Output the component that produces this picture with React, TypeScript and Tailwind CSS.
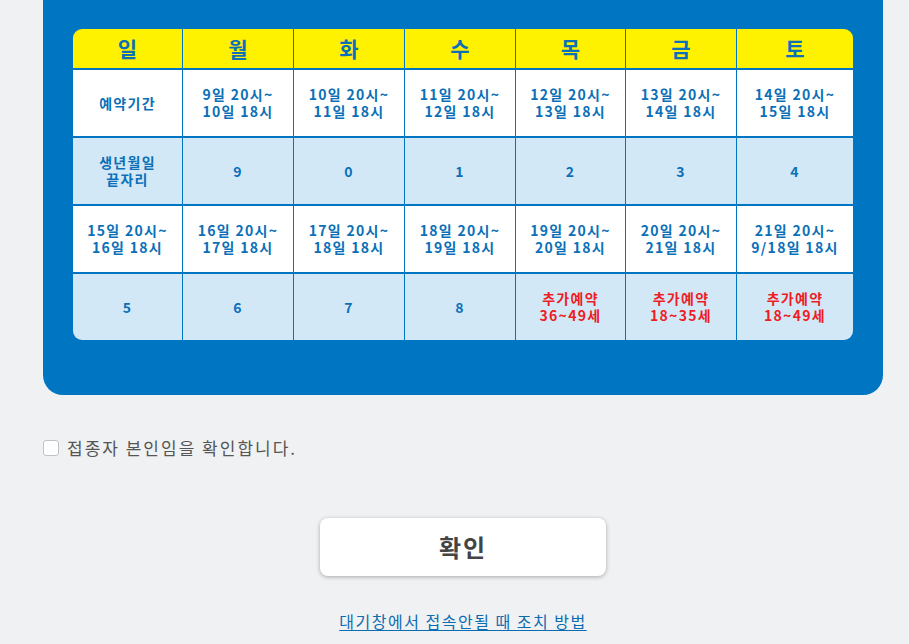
import { Fragment } from "react";

const days = ["일", "월", "화", "수", "목", "금", "토"];

type Cell = { text: string[]; red?: boolean };

const rows: { bg: string; cells: Cell[] }[] = [
  {
    bg: "bg-white",
    cells: [
      { text: ["예약기간"] },
      { text: ["9일 20시~", "10일 18시"] },
      { text: ["10일 20시~", "11일 18시"] },
      { text: ["11일 20시~", "12일 18시"] },
      { text: ["12일 20시~", "13일 18시"] },
      { text: ["13일 20시~", "14일 18시"] },
      { text: ["14일 20시~", "15일 18시"] },
    ],
  },
  {
    bg: "bg-[#d3e8f7]",
    cells: [
      { text: ["생년월일", "끝자리"] },
      { text: ["9"] },
      { text: ["0"] },
      { text: ["1"] },
      { text: ["2"] },
      { text: ["3"] },
      { text: ["4"] },
    ],
  },
  {
    bg: "bg-white",
    cells: [
      { text: ["15일 20시~", "16일 18시"] },
      { text: ["16일 20시~", "17일 18시"] },
      { text: ["17일 20시~", "18일 18시"] },
      { text: ["18일 20시~", "19일 18시"] },
      { text: ["19일 20시~", "20일 18시"] },
      { text: ["20일 20시~", "21일 18시"] },
      { text: ["21일 20시~", "9/18일 18시"] },
    ],
  },
  {
    bg: "bg-[#d3e8f7]",
    cells: [
      { text: ["5"] },
      { text: ["6"] },
      { text: ["7"] },
      { text: ["8"] },
      { text: ["추가예약", "36~49세"], red: true },
      { text: ["추가예약", "18~35세"], red: true },
      { text: ["추가예약", "18~49세"], red: true },
    ],
  },
];

export default function App() {
  return (
    <div className="min-h-[644px] bg-[#f0f1f3] font-['Noto_Sans_CJK_KR','Noto_Sans',sans-serif]">
      <div className="ml-[43px] w-[840px]">
        {/* Schedule panel */}
        <div className="rounded-b-[20px] bg-[#0075c1] px-[30px] pt-[29px] pb-[55px]">
          <div className="grid grid-cols-[109px_110px_110px_110px_109px_110px_1fr] gap-x-px gap-y-[2px] overflow-hidden rounded-[9px]">
            {days.map((d) => (
              <div key={d} className="flex h-[39px] items-center justify-center bg-[#fff200] text-[21px] font-bold leading-none text-[#0b70b8]">
                {d}
              </div>
            ))}
            {rows.map((row, ri) =>
              row.cells.map((c, ci) => (
                <div
                  key={`${ri}-${ci}`}
                  className={`flex h-[66px] items-center justify-center ${row.bg} text-center text-[14px] font-bold leading-[17px] tracking-[1.3px] ${c.red ? "text-[#ee1c25]" : "text-[#0b70b8]"}`}
                >
                  <p>
                    {c.text.map((t, i) => (
                      <Fragment key={t}>
                        {i > 0 && <br />}
                        {t}
                      </Fragment>
                    ))}
                  </p>
                </div>
              ))
            )}
          </div>
        </div>

        {/* Confirmation checkbox */}
        <label className="mt-[40px] flex items-center gap-[8px] text-[17px] tracking-[2px] text-[#555]">
          <span className="h-[16px] w-[16px] shrink-0 rounded-[3px] border border-[#bfc3c8] bg-white" />
          접종자 본인임을 확인합니다.
        </label>

        <div className="flex flex-col items-center">
          <button className="mt-[57px] h-[58px] w-[286px] rounded-[8px] bg-white text-[24px] font-bold tracking-[2px] text-[#444] shadow-[0_1px_4px_rgba(0,0,0,0.3)]">
            확인
          </button>
          <a href="#" className="mt-[33px] text-[16px] tracking-[1.5px] text-[#0b6cb0] underline underline-offset-2">
            대기창에서 접속안될 때 조치 방법
          </a>
        </div>
      </div>
    </div>
  );
}
